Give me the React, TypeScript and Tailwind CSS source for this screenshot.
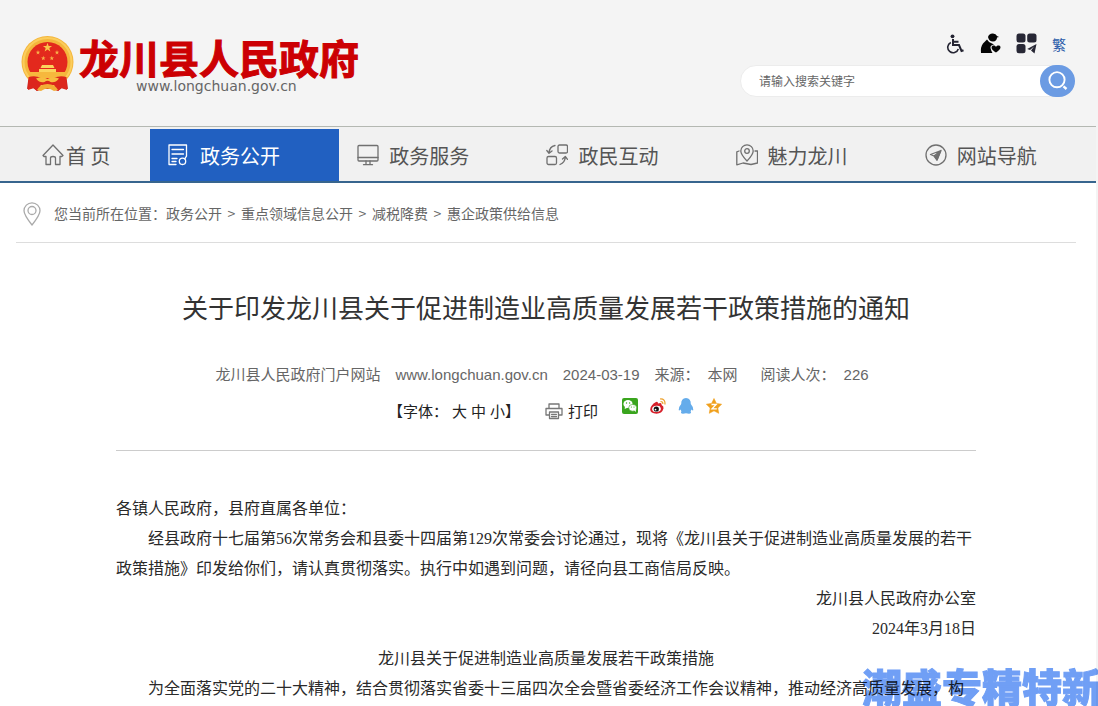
import type { ReactNode } from "react";

function star(cx: number, cy: number, r: number) {
  const points: string[] = [];
  for (let i = 0; i < 10; i++) {
    const radius = i % 2 === 0 ? r : r * 0.4;
    const angle = (Math.PI / 5) * i - Math.PI / 2;
    points.push(`${(cx + radius * Math.cos(angle)).toFixed(2)},${(cy + radius * Math.sin(angle)).toFixed(2)}`);
  }
  return points.join(" ");
}

function Emblem() {
  return (
    <svg className="h-14 w-[53px]" viewBox="0 0 53 56" aria-hidden="true">
      <path d="M8 38 L45 38 L47 53 L41 52 L37 55 L31 53 H22 L16 55 L12 52 L6 53 Z" fill="#c9201c" />
      <circle cx="26.500" cy="26" r="26" fill="#f4b63c" />
      <circle cx="26.500" cy="26" r="24" fill="none" stroke="#fbcd5c" strokeWidth="2" />
      <circle cx="26.500" cy="26" r="20" fill="#e3291d" />
      <path d="M7 36 H46 L41 42 H12 Z" fill="#f6b83d" />
      <polygon points={star(26.5, 11.5, 4.8)} fill="#f9c64b" />
      <polygon points={star(17, 16.5, 2.4)} fill="#f9b34b" />
      <polygon points={star(36, 16.5, 2.4)} fill="#f9b34b" />
      <polygon points={star(22.3, 22.2, 2.4)} fill="#f9b34b" />
      <polygon points={star(30.8, 22.2, 2.4)} fill="#f9b34b" />
      <path d="M21 29 H32 L33.500 32 H19.500 Z M18 33 H35 V36 H18 Z" fill="#fbd45c" />
      <path d="M7.500 41 Q16 39 22 43 Q26.500 46 31 43 Q37 39 45.500 41 L46 54 L40 52 L37 55 L33 49 H20 L16 55 L13 52 L7 54 Z" fill="#dc261c" />
      <path d="M15 42.500 Q22 40 26.500 43 Q31 40 38 42.500 Q34 47.500 29.500 46 Q26.500 43.500 23.500 46 Q19 47.500 15 42.500" fill="#f7bc40" />
      <path d="M16 54 Q19 48 26.500 48 Q34 48 37 54 L33 55 Q26.500 50 20 55 Z" fill="#f2ad35" />
    </svg>
  );
}

function WheelchairIcon() {
  return (
    <svg className="size-5" viewBox="0 0 20 20" fill="none" stroke="#242432" aria-hidden="true">
      <circle cx="7.500" cy="2.300" r="1.900" fill="#242432" stroke="none" />
      <path d="M8 5 V11 H14 L16.500 17 L18.500 16.200 M8.500 7.800 H13.500" strokeWidth="2" />
      <path d="M5.800 8.500 A5.400 5.400 0 1 0 13.300 15" strokeWidth="1.600" />
    </svg>
  );
}

function ElderCareIcon() {
  return (
    <svg className="size-[21px]" viewBox="0 0 21 21" aria-hidden="true">
      <path d="M8 4 Q9 .3 13 .5 Q16 .8 17 3 L19 4 L17 4.400 Q17 8 13 8.500 Q9 8.500 8 4 Z" fill="#050505" />
      <path d="M7 6.500 Q9 10 12 10.500 L14 11.500 Q10 12 10.500 15 Q11 17.500 12.500 20 H1 Q.3 14 3 10.500 Z" fill="#050505" />
      <path d="M16 19.500 C12.500 17 11.500 16 11.600 14.200 C11.800 12 15 12 16 14 C17 12 20.600 12 20.500 14.500 C20.400 16.300 18.500 18 16 19.500Z" fill="#050505" />
    </svg>
  );
}

function AppsIcon() {
  return (
    <svg className="size-[21px]" viewBox="0 0 21 21" fill="#272735" aria-hidden="true">
      <rect x=".5" y=".5" width="9" height="9" rx="2.500" />
      <rect x="11.200" y=".5" width="9.300" height="9" rx="2.500" />
      <rect x=".5" y="11" width="9" height="9.300" rx="2.500" />
      <path d="M20.500 11 L11.200 16 L14 17 L18 13.500 L15 17.500 L18.500 20.500 Z" />
    </svg>
  );
}

function Line({ children, box = "0 0 22 22", className = "size-[22px]" }: { children: ReactNode; box?: string; className?: string }) {
  return (
    <svg
      className={className}
      viewBox={box}
      fill="none"
      stroke="currentColor"
      strokeWidth="1.300"
      strokeLinejoin="round"
      strokeLinecap="round"
      aria-hidden="true"
    >
      {children}
    </svg>
  );
}

const items = [
  {
    label: "政务公开",
    active: true,
    icon: (
      <>
        <path d="M8 20.500 H1 V1 H18.500 V12 M4 5.500 H15.500 M4 10 H15.500 M4 14.500 H9 M4 17.500 H8" />
        <circle cx="14.500" cy="17.300" r="3.200" />
        <path d="M18.500 12 L16.800 14.800" />
      </>
    ),
  },
  {
    label: "政务服务",
    icon: (
      <>
        <rect x="1" y="1.500" width="20" height="15.500" rx="1" />
        <path d="M1 13.500 H21 M9 17 V20 M13 17 V20 M6.500 20.700 H15.500" />
      </>
    ),
  },
  {
    label: "政民互动",
    icon: (
      <>
        <rect x="12" y="1" width="9.500" height="8" rx="1.500" />
        <rect x="1" y="12.500" width="9.500" height="8" rx="1.500" />
        <path d="M9 1.500 Q3.500 2.500 3 9 M.8 6.500 L3 9.300 L6 7 M14 20.500 Q19 18.500 19.300 13 M16.500 15 L19.300 12.500 L21.500 15.300" />
      </>
    ),
  },
  {
    label: "魅力龙川",
    icon: (
      <>
        <path d="M11 17 Q4.800 10.500 4.800 7 A6.200 6.200 0 0 1 17.200 7 Q17.200 10.500 11 17Z" />
        <circle cx="11" cy="7" r="2.300" />
        <path d="M3 7 L.8 7.800 V20.800 L7 19 L15 20.500 L21.500 19 V7 H19" />
      </>
    ),
  },
  {
    label: "网站导航",
    icon: (
      <>
        <circle cx="11" cy="11" r="10" />
        <path d="M16 6.500 L5.500 10.500 L9 12 L12 16 Z M16 6.500 L9 12" />
        <path d="M15.500 7 L10 12.500 L12 16 Z" fill="currentColor" />
      </>
    ),
  },
];

const crumbs = ["政务公开", "重点领域信息公开", "减税降费", "惠企政策供给信息"];

function Header() {
  return (
    <header className="flex h-[126px] justify-between bg-[#f4f4f4] px-[21px]">
      <a href="#" className="flex gap-[5px] pt-9">
        <Emblem />
        <span className="flex flex-col">
          <span className="text-[40px] leading-[43px] font-bold text-[#cc0003] [-webkit-text-stroke:1px_#cc0003]">龙川县人民政府</span>
          <span className="pl-[57px] font-[DejaVu_Sans] text-[14px] leading-[14px] text-[#666]">www.longchuan.gov.cn</span>
        </span>
      </a>
      <div className="flex flex-col gap-[11px] pt-[33px]">
        <div className="flex h-[21px] items-center justify-end gap-[15px] pr-[9px]">
          <a href="#" aria-label="无障碍"><WheelchairIcon /></a>
          <a href="#" aria-label="长者助手"><ElderCareIcon /></a>
          <a href="#" aria-label="应用"><AppsIcon /></a>
          <a href="#" className="text-[14px] leading-5 text-[#2859a8]">繁</a>
        </div>
        <form className="flex h-8 w-[335px]" onSubmit={(e) => e.preventDefault()}>
          <div className="-mr-4 flex flex-1 rounded-l-full border border-[#ececec] bg-white">
            <input
              type="text"
              aria-label="搜索关键字"
              placeholder="请输入搜索关键字"
              className="w-full bg-transparent pl-[18px] text-[12px] text-[#333] outline-none placeholder:text-[#666]"
            />
          </div>
          <button type="submit" aria-label="搜索" className="z-10 flex w-[35px] items-center justify-center rounded-full bg-[#6b9be3]">
            <svg className="size-5" viewBox="0 0 20 20" fill="none" stroke="white" strokeWidth="1.900" aria-hidden="true">
              <circle cx="9" cy="8.700" r="7.600" />
              <path d="M15.500 15.300 L18.500 18" strokeWidth="2.400" />
            </svg>
          </button>
        </form>
      </div>
    </header>
  );
}

function Nav() {
  return (
    <nav className="flex h-[57px] border-t border-b-2 border-t-[#b4b8b2] border-b-[#37658e] bg-[#f1f1f1] pt-[2px] text-[20px] text-[#555]">
      <a href="#" className="flex w-[150px] items-center gap-[2px] pl-[42px]">
        <Line className="size-[22px] text-[#707070]">
          <path d="M1 11.500 L11 1 L21 11.500 L19.800 12.500 H18 V20.500 H13.500 V14 Q13.500 12.500 11 12.500 Q8.500 12.500 8.500 14 V20.500 H4 V12.500 H2 Z" />
        </Line>
        <span className="pt-[2px]">首 页</span>
      </a>
      {items.map((item) => (
        <a
          key={item.label}
          href="#"
          className={
            item.active
              ? "flex flex-1 items-center gap-[10px] bg-[#2160c1] pl-[18px] text-white"
              : "flex flex-1 items-center gap-[10px] pl-[18px]"
          }
        >
          <Line className={item.active ? "size-[22px] text-white" : "size-[22px] text-[#707070]"}>{item.icon}</Line>
          <span className="pt-[2px]">{item.label}</span>
        </a>
      ))}
    </nav>
  );
}

function Breadcrumb() {
  return (
    <div className="mr-5 ml-4 flex h-[60px] items-center border-b border-[#ddd] pt-[2px] pl-[7px] text-[14px] text-[#666]">
      <Line className="mr-[13px] h-6 w-[18px] text-[#aaa]" box="0 0 18 24">
        <path d="M9 23 Q1 13 1 8.800 A8 8 0 0 1 17 8.800 Q17 13 9 23Z" />
        <circle cx="9" cy="8.500" r="4" />
      </Line>
      <span>您当前所在位置：</span>
      {crumbs.map((c, i) => (
        <span key={c} className="flex">
          {i > 0 && <span className="w-[19px] text-center">&gt;</span>}
          <a href="#">{c}</a>
        </span>
      ))}
    </div>
  );
}

function ShareIcons() {
  return (
    <div className="mb-[10px] ml-6 flex gap-3">
      <a href="#" aria-label="微信">
        <svg className="size-4" viewBox="0 0 16 16" aria-hidden="true">
          <rect width="16" height="16" rx="2" fill="#3aa51e" />
          <ellipse cx="6" cy="6" rx="4.600" ry="3.900" fill="#fff" />
          <path d="M3 8 L2.700 11 L6 9.500Z" fill="#fff" />
          <ellipse cx="10.700" cy="9.800" rx="4" ry="3.400" fill="#fff" stroke="#3aa51e" strokeWidth=".6" />
          <path d="M12 12 L13.700 14 L14 11Z" fill="#fff" />
          <g fill="#3aa51e">
            <circle cx="4.500" cy="5" r=".7" /><circle cx="7.600" cy="5" r=".7" />
            <circle cx="9.400" cy="9" r=".6" /><circle cx="12" cy="9" r=".6" />
          </g>
        </svg>
      </a>
      <a href="#" aria-label="微博">
        <svg className="size-4" viewBox="0 0 16 16" aria-hidden="true">
          <path d="M6 4 Q8 3 8 5.500 Q12 4 11.600 7 Q14 8 13.500 10.500 Q12 15.700 6.500 15.700 Q.3 15.500 .2 11.500 Q.5 7 6 4Z" fill="#d7202b" />
          <ellipse cx="6.500" cy="10.900" rx="4.400" ry="3.100" fill="#fff" transform="rotate(-10 6.500 10.900)" />
          <circle cx="6.300" cy="11" r="2.600" fill="#111" />
          <circle cx="5.500" cy="11.600" r=".9" fill="#fff" />
          <path d="M10 1 Q15.500 .5 15 6.500 M10.500 3.500 Q13.200 3.500 12.800 6" fill="none" stroke="#eda02b" strokeWidth="1.200" />
        </svg>
      </a>
      <a href="#" aria-label="QQ">
        <svg className="size-4" viewBox="0 0 16 16" aria-hidden="true">
          <path d="M8 0 Q13 .5 12.800 6 Q15.500 9 15.300 12 Q15 13 13.500 11.500 L12.600 13.300 Q14 15.500 11 15.800 L8 15.300 L5 15.800 Q2 15.500 3.400 13.300 L2.500 11.500 Q1 13 .7 12 Q.5 9 3.200 6 Q3 .5 8 0Z" fill="#65aceb" />
        </svg>
      </a>
      <a href="#" aria-label="QQ空间">
        <svg className="size-4" viewBox="0 0 16 16" aria-hidden="true">
          <path d="M8 .5 L10.400 5.400 L15.600 6.200 L11.800 10 L12.700 15.300 L8 12.800 L3.300 15.300 L4.200 10 L.4 6.200 L5.600 5.400 Z" fill="#f0a01c" stroke="#f0a01c" strokeWidth=".6" strokeLinejoin="round" />
          <path d="M5.500 6.500 H10.200 L6 10.800 H10.800" fill="none" stroke="#fff" strokeWidth="1.300" />
        </svg>
      </a>
    </div>
  );
}

function Article() {
  return (
    <article className="mr-[120px] ml-[116px]">
      <h1 className="pt-[44px] text-center text-[26px] leading-[40px] text-[#333]">
        关于印发龙川县关于促进制造业高质量发展若干政策措施的通知
      </h1>
      <div className="mt-[38px] flex h-5 items-center justify-center gap-[15px] pr-2 font-['Liberation_Sans','Noto_Sans_CJK_SC',sans-serif] text-[15px] text-[#666]">
        <span>龙川县人民政府门户网站</span>
        <span>www.longchuan.gov.cn</span>
        <span>2024-03-19</span>
        <span className="flex gap-2"><span>来源：</span><span>本网</span></span>
        <span className="ml-2 flex gap-2"><span>阅读人次：</span><span>226</span></span>
      </div>
      <div className="flex h-[66px] items-center border-b border-[#ccc] pb-[13px] pl-[272px] text-[15px] text-[#222]">
        <span className="flex">
          <span>【字体：</span>
          <span className="flex gap-1 pl-1">
            <button type="button">大</button>
            <button type="button">中</button>
            <button type="button">小</button>
          </span>
          <span>】</span>
        </span>
        <button type="button" className="ml-[25px] flex items-center gap-[5px]">
          <Line className="size-[18px] text-[#777]" box="0 0 18 18">
            <path d="M4 6 V2 H14 V6 M4 13 H1 V6.500 H17 V13 H14 M4.500 10 H13.500 V16.500 H4.500 Z M6.500 12.300 H11.500 M6.500 14.500 H11.500" />
          </Line>
          打印
        </button>
        <ShareIcons />
      </div>
      <div className="pt-[43px] font-['Liberation_Serif','Noto_Sans_CJK_SC',sans-serif] text-[16px] leading-[30px] text-[#2a2a2a]">
        <p>各镇人民政府，县府直属各单位：</p>
        <p className="indent-8">
          经县政府十七届第56次常务会和县委十四届第129次常委会讨论通过，现将《龙川县关于促进制造业高质量发展的若干政策措施》印发给你们，请认真贯彻落实。执行中如遇到问题，请径向县工商信局反映。
        </p>
        <p className="text-right">龙川县人民政府办公室</p>
        <p className="text-right">2024年3月18日</p>
        <p className="text-center">龙川县关于促进制造业高质量发展若干政策措施</p>
        <p className="indent-8">
          为全面落实党的二十大精神，结合贯彻落实省委十三届四次全会暨省委经济工作会议精神，推动经济高质量发展，构
        </p>
      </div>
    </article>
  );
}

export default function App() {
  return (
    <div lang="zh-CN" className="min-h-screen bg-[#f4f4f4] pr-[2px] font-['Noto_Sans_CJK_SC',sans-serif]">
      <div className="min-h-screen bg-white">
        <Header />
        <Nav />
        <main>
          <Breadcrumb />
          <Article />
        </main>
      </div>
      <div className="pointer-events-none fixed -right-1 bottom-0 text-[40px] leading-[40px] font-black whitespace-nowrap text-[#709ff5] mix-blend-multiply [-webkit-text-stroke:1px_#709ff5]">
        潮盛专精特新
      </div>
    </div>
  );
}
